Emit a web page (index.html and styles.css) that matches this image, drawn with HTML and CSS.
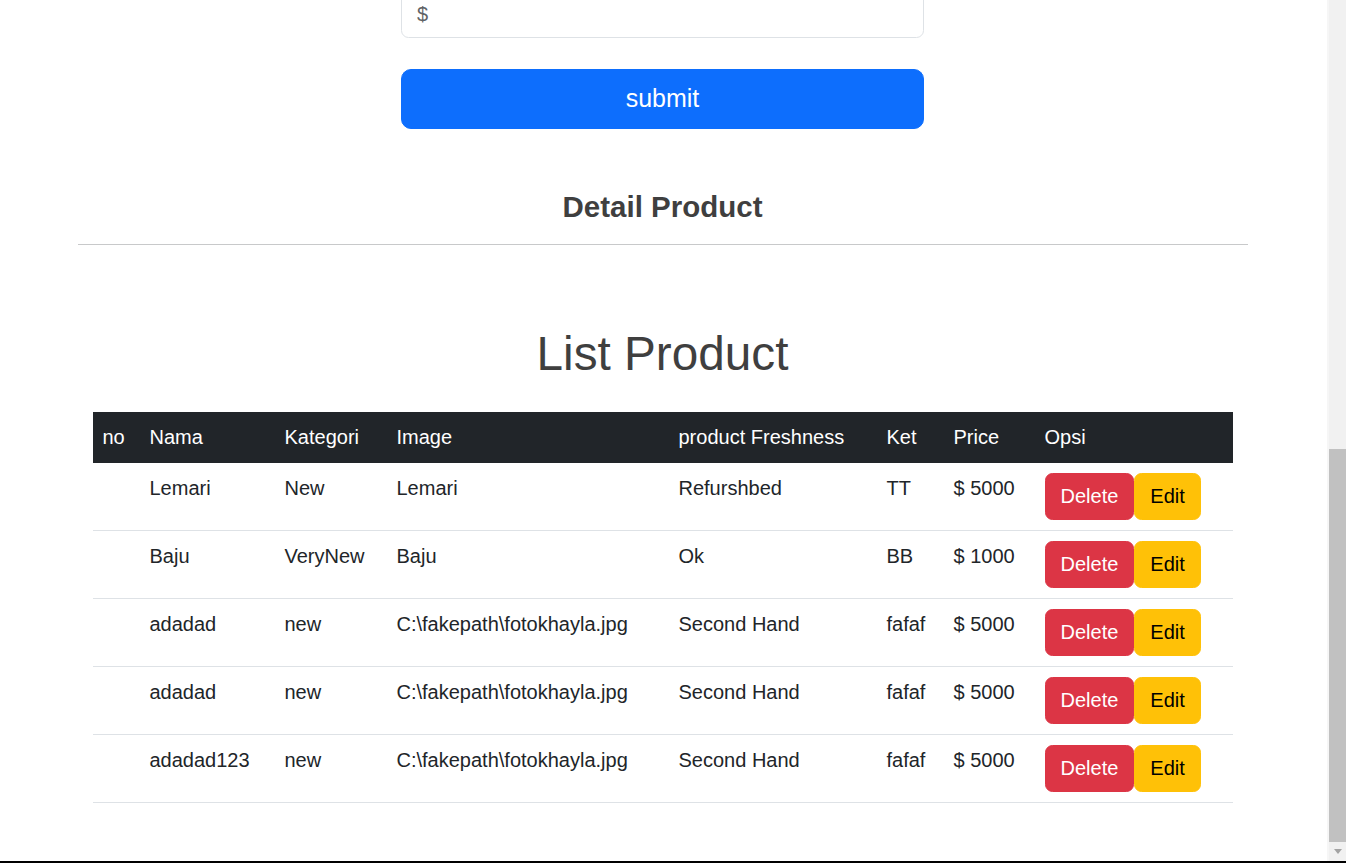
FILE: index.html
```html
<!DOCTYPE html>
<html lang="en">
<head>
<meta charset="utf-8">
<title>List Product</title>
<link rel="stylesheet" href="styles.css">
</head>
<body>
<div class="window">
  <main class="viewport">
    <section class="form-area">
      <input class="form-control" type="text" placeholder="$">
      <button class="btn-submit" type="button">submit</button>
    </section>
    <h4 class="detail-title">Detail Product</h4>
    <hr class="divider">
    <h1 class="list-title">List Product</h1>
    <table class="products">
      <colgroup>
        <col class="c-no"><col class="c-nama"><col class="c-kat"><col class="c-img">
        <col class="c-fresh"><col class="c-ket"><col class="c-price"><col class="c-opsi">
      </colgroup>
      <thead>
        <tr><th>no</th><th>Nama</th><th>Kategori</th><th>Image</th><th>product Freshness</th><th>Ket</th><th>Price</th><th>Opsi</th></tr>
      </thead>
      <tbody>
        <tr><td></td><td>Lemari</td><td>New</td><td>Lemari</td><td>Refurshbed</td><td>TT</td><td>$ 5000</td>
          <td><div class="actions"><button class="btn btn-danger" type="button">Delete</button><button class="btn btn-warning" type="button">Edit</button></div></td></tr>
        <tr><td></td><td>Baju</td><td>VeryNew</td><td>Baju</td><td>Ok</td><td>BB</td><td>$ 1000</td>
          <td><div class="actions"><button class="btn btn-danger" type="button">Delete</button><button class="btn btn-warning" type="button">Edit</button></div></td></tr>
        <tr><td></td><td>adadad</td><td>new</td><td>C:\fakepath\fotokhayla.jpg</td><td>Second Hand</td><td>fafaf</td><td>$ 5000</td>
          <td><div class="actions"><button class="btn btn-danger" type="button">Delete</button><button class="btn btn-warning" type="button">Edit</button></div></td></tr>
        <tr><td></td><td>adadad</td><td>new</td><td>C:\fakepath\fotokhayla.jpg</td><td>Second Hand</td><td>fafaf</td><td>$ 5000</td>
          <td><div class="actions"><button class="btn btn-danger" type="button">Delete</button><button class="btn btn-warning" type="button">Edit</button></div></td></tr>
        <tr><td></td><td>adadad123</td><td>new</td><td>C:\fakepath\fotokhayla.jpg</td><td>Second Hand</td><td>fafaf</td><td>$ 5000</td>
          <td><div class="actions"><button class="btn btn-danger" type="button">Delete</button><button class="btn btn-warning" type="button">Edit</button></div></td></tr>
      </tbody>
    </table>
  </main>
  <div class="scrollbar">
    <div class="thumb"></div>
    <div class="arrow-box"><span class="arrow-down"></span></div>
  </div>
</div>
</body>
</html>
```
FILE: styles.css
```css
* { box-sizing: border-box; }

html, body {
  margin: 0;
  padding: 0;
  background: #fff;
}

body {
  font-family: "Liberation Sans", Arial, sans-serif;
  font-size: 20px;
  line-height: 1.5;
  color: #212529;
}

.window {
  display: flex;
  height: 863px;
  border-bottom: 2px solid #000;
  overflow: hidden;
}

.viewport {
  flex: 1;
  min-width: 0;
  padding-right: 2px;
  display: flex;
  flex-direction: column;
  align-items: center;
  overflow: hidden;
}

.form-area {
  width: 523px;
  margin-top: -9px;
  display: flex;
  flex-direction: column;
  gap: 31px;
}

.form-control {
  display: block;
  width: 100%;
  height: 47px;
  padding: 7.5px 15px;
  font-family: inherit;
  font-size: 20px;
  line-height: 30px;
  color: #212529;
  background: #fff;
  border: 1px solid #dee2e6;
  border-radius: 7.5px;
  outline: none;
}

.form-control::placeholder {
  color: #5f6366;
}

.btn-submit {
  display: block;
  width: 100%;
  height: 60px;
  padding: 10px 20px;
  font-family: inherit;
  font-size: 25px;
  line-height: 37.5px;
  color: #fff;
  background: #0d6efd;
  border: 1px solid #0d6efd;
  border-radius: 10px;
}

.detail-title {
  margin: 60px 0 0;
  font-size: 29.5px;
  font-weight: 700;
  line-height: 1.2;
  color: #3f3f3f;
  text-align: center;
}

.divider {
  width: 1170px;
  height: 0;
  margin: 20px 0 0;
  border: 0;
  border-top: 1px solid #c8c9ca;
}

.list-title {
  margin: 80px 0 0;
  font-size: 47.7px;
  font-weight: 400;
  line-height: 1.2;
  color: #3f3f3f;
  text-align: center;
}

.products {
  width: 1140px;
  margin-top: 29px;
  border-collapse: collapse;
  table-layout: fixed;
  vertical-align: top;
}

.c-no { width: 47px; }
.c-nama { width: 135px; }
.c-kat { width: 112px; }
.c-img { width: 282px; }
.c-fresh { width: 208px; }
.c-ket { width: 67px; }
.c-price { width: 91px; }
.c-opsi { width: 198px; }

.products th,
.products td {
  padding: 10px;
  line-height: 30px;
  text-align: left;
  vertical-align: top;
  white-space: nowrap;
}

.products th {
  font-weight: 400;
  color: #fff;
  background: #212529;
  border-bottom: 1px solid #212529;
}

.products td {
  border-bottom: 1px solid #dee2e6;
}

.actions {
  display: flex;
}

.btn {
  display: inline-block;
  padding: 7.5px 15px;
  font-family: inherit;
  font-size: 20px;
  line-height: 30px;
  border: 1px solid transparent;
  border-radius: 7.5px;
}

.btn-danger {
  color: #fff;
  background: #dc3545;
  border-color: #dc3545;
}

.btn-warning {
  color: #000;
  background: #ffc107;
  border-color: #ffc107;
}

.scrollbar {
  flex: 0 0 19px;
  display: flex;
  flex-direction: column;
  background: #f1f1f1;
  border-left: 2px solid #f6f6f6;
}

.thumb {
  height: 393px;
  margin-top: 449px;
  background: #c1c1c1;
}

.arrow-box {
  flex: 1;
  display: flex;
  align-items: center;
  justify-content: center;
}

.arrow-down {
  width: 0;
  height: 0;
  border-left: 4.5px solid transparent;
  border-right: 4.5px solid transparent;
  border-top: 5px solid #a3a3a3;
}
```
